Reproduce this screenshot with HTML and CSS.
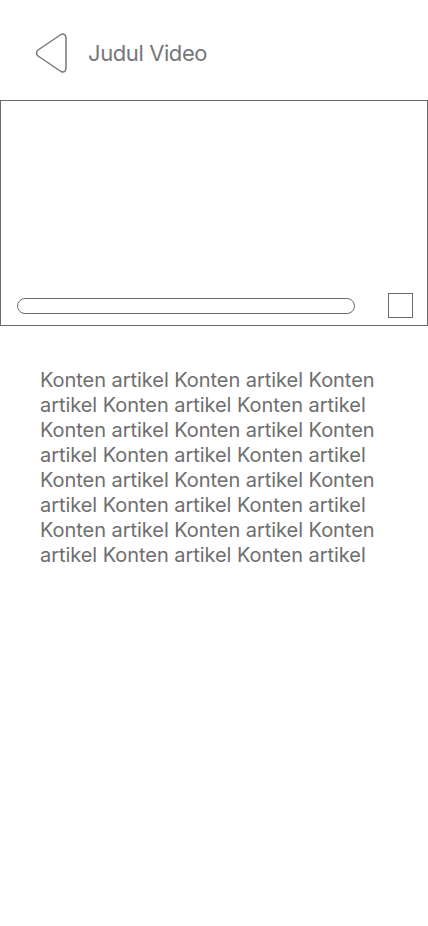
FILE: index.html
```html
<!DOCTYPE html>
<html lang="id">
<head>
<meta charset="utf-8">
<link rel="stylesheet" href="styles.css">
</head>
<body>
<header class="header">
  <svg class="back" width="34" height="42" viewBox="0 0 34 42">
    <path d="M27 2.5 C30 1 32 3 32 6 L32 36 C32 39 30 41 27 39.5 L4 24 C2 22.5 2 19.5 4 18 Z" fill="none" stroke="#777" stroke-width="1.5" stroke-linejoin="round"/>
  </svg>
  <h1 class="title">Judul Video</h1>
</header>
<section class="player">
  <div class="controls">
    <div class="progress"></div>
    <div class="fullscreen"></div>
  </div>
</section>
<p class="article">Konten artikel Konten artikel Konten artikel Konten artikel Konten artikel Konten artikel Konten artikel Konten artikel Konten artikel Konten artikel Konten artikel Konten artikel Konten artikel Konten artikel Konten artikel Konten artikel Konten artikel Konten artikel Konten artikel Konten artikel</p>
</body>
</html>
```
FILE: styles.css
```css
* { box-sizing: border-box; }
body {
  margin: 0;
  background: #fff;
  font-family: Inter, "Noto Sans", sans-serif;
  color: #707070;
}
.header {
  display: flex;
  align-items: center;
  gap: 20px;
  height: 100px;
  padding: 0 0 0 34px;
}
.back { display: block; margin-top: 6px; }
.title {
  margin: 6px 0 0 0;
  font-size: 22px;
  font-weight: 400;
  letter-spacing: -0.4px;
  color: #777;
}
.player {
  height: 226px;
  border: 1.5px solid #6b6b6b;
  display: flex;
  align-items: flex-end;
}
.controls {
  flex: 1;
  display: flex;
  align-items: center;
  padding: 0 14px 7px 16px;
}
.progress {
  width: 338px;
  height: 16px;
  border: 1.5px solid #6b6b6b;
  border-radius: 8px;
}
.fullscreen {
  margin-left: auto;
  width: 25px;
  height: 25px;
  border: 1.5px solid #6b6b6b;
}
.article {
  margin: 42px 40px 0 40px;
  font-size: 20px;
  line-height: 25px;
  letter-spacing: -0.05px;
  color: #6e6e6e;
  width: 350px;
}
```
